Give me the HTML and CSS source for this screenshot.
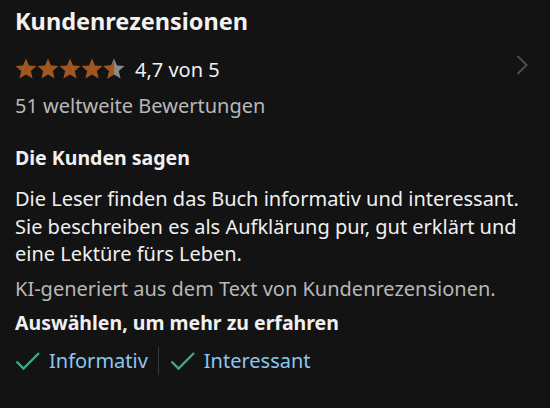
FILE: index.html
```html
<!DOCTYPE html>
<html lang="de">
<head>
<meta charset="utf-8">
<link rel="stylesheet" href="styles.css">
</head>
<body>
<div class="card">
  <div class="head">
    <div class="head-main">
      <h1 class="title">Kundenrezensionen</h1>
      <div class="rating">
        <div class="stars">
          <svg width="112" height="22" viewBox="0 0 112 22">
            <defs>
              <path id="st" d="M11 0.5l3 7 7.5.6-5.7 4.9 1.8 7.4L11 16.5l-6.6 3.9 1.8-7.4L.5 8.1 8 7.5z"/>
              <clipPath id="part"><rect x="86" y="0" width="13" height="22"/></clipPath>
            </defs>
            <use href="#st" x="0" fill="#a0561f"/>
            <use href="#st" x="22" fill="#a0561f"/>
            <use href="#st" x="44" fill="#a0561f"/>
            <use href="#st" x="66" fill="#a0561f"/>
            <use href="#st" x="88" fill="#8d8985"/>
            <g clip-path="url(#part)"><use href="#st" x="88" fill="#a0561f"/></g>
          </svg>
        </div>
        <span class="score">4,7 von 5</span>
      </div>
      <div class="count">51 weltweite Bewertungen</div>
    </div>
    <svg class="chev" width="12" height="20" viewBox="0 0 12 20"><path d="M1.5 1l9 9-9 9" fill="none" stroke="#4e4e4e" stroke-width="2"/></svg>
  </div>
  <h2 class="sub">Die Kunden sagen</h2>
  <p class="summary">Die Leser finden das Buch informativ und interessant. Sie beschreiben es als Aufklärung pur, gut erklärt und eine Lektüre fürs Leben.</p>
  <p class="note">KI-generiert aus dem Text von Kundenrezensionen.</p>
  <h3 class="sub2">Auswählen, um mehr zu erfahren</h3>
  <div class="chips">
    <span class="chip"><svg class="check" width="25" height="20" viewBox="0 0 25 20"><path d="M1.5 10.5l7 7L24 2" fill="none" stroke="#3fa88a" stroke-width="2.4"/></svg>Informativ</span>
    <span class="sep"></span>
    <span class="chip"><svg class="check" width="25" height="20" viewBox="0 0 25 20"><path d="M1.5 10.5l7 7L24 2" fill="none" stroke="#3fa88a" stroke-width="2.4"/></svg>Interessant</span>
  </div>
</div>
</body>
</html>
```
FILE: styles.css
```css
html, body {
  margin: 0;
  background: #131313;
}
body {
  font-family: "Noto Sans", "Open Sans", sans-serif;
  color: #f0f0f0;
}
.card {
  padding: 5px 15px 0 15px;
}
.head {
  display: flex;
  align-items: flex-start;
}
.head-main {
  flex: 1;
}
.title {
  margin: 0;
  font-size: 23.5px;
  font-weight: 700;
  line-height: 32px;
  color: #f2f2f2;
}
.rating {
  display: flex;
  align-items: center;
  margin-top: 19px;
  height: 26px;
}
.stars {
  display: flex;
  width: 120px;
}
.stars svg { display: block; }
.score {
  font-size: 20px;
  color: #f0f0f0;
}
.count {
  margin-top: 11px;
  font-size: 20px;
  line-height: 26px;
  color: #b8b8b8;
}
.chev {
  margin-top: 50px;
  margin-right: 7px;
}
.sub {
  margin: 26px 0 0;
  font-size: 19.5px;
  font-weight: 700;
  line-height: 26px;
}
.summary {
  margin: 14px 0 0;
  font-size: 20px;
  line-height: 27.5px;
  color: #f0f0f0;
}
.note {
  margin: 8px 0 0;
  font-size: 20px;
  line-height: 26px;
  color: #b8b8b8;
}
.sub2 {
  margin: 8px 0 0;
  font-size: 19.5px;
  font-weight: 700;
  line-height: 26px;
}
.chips {
  display: flex;
  align-items: center;
  margin-top: 10px;
  height: 30px;
}
.chip {
  display: flex;
  align-items: center;
  gap: 9px;
  font-size: 20px;
  color: #8cc6ef;
}
.sep {
  width: 1px;
  height: 28px;
  background: #3a3a3a;
  margin: 0 11px 0 10px;
}
```
